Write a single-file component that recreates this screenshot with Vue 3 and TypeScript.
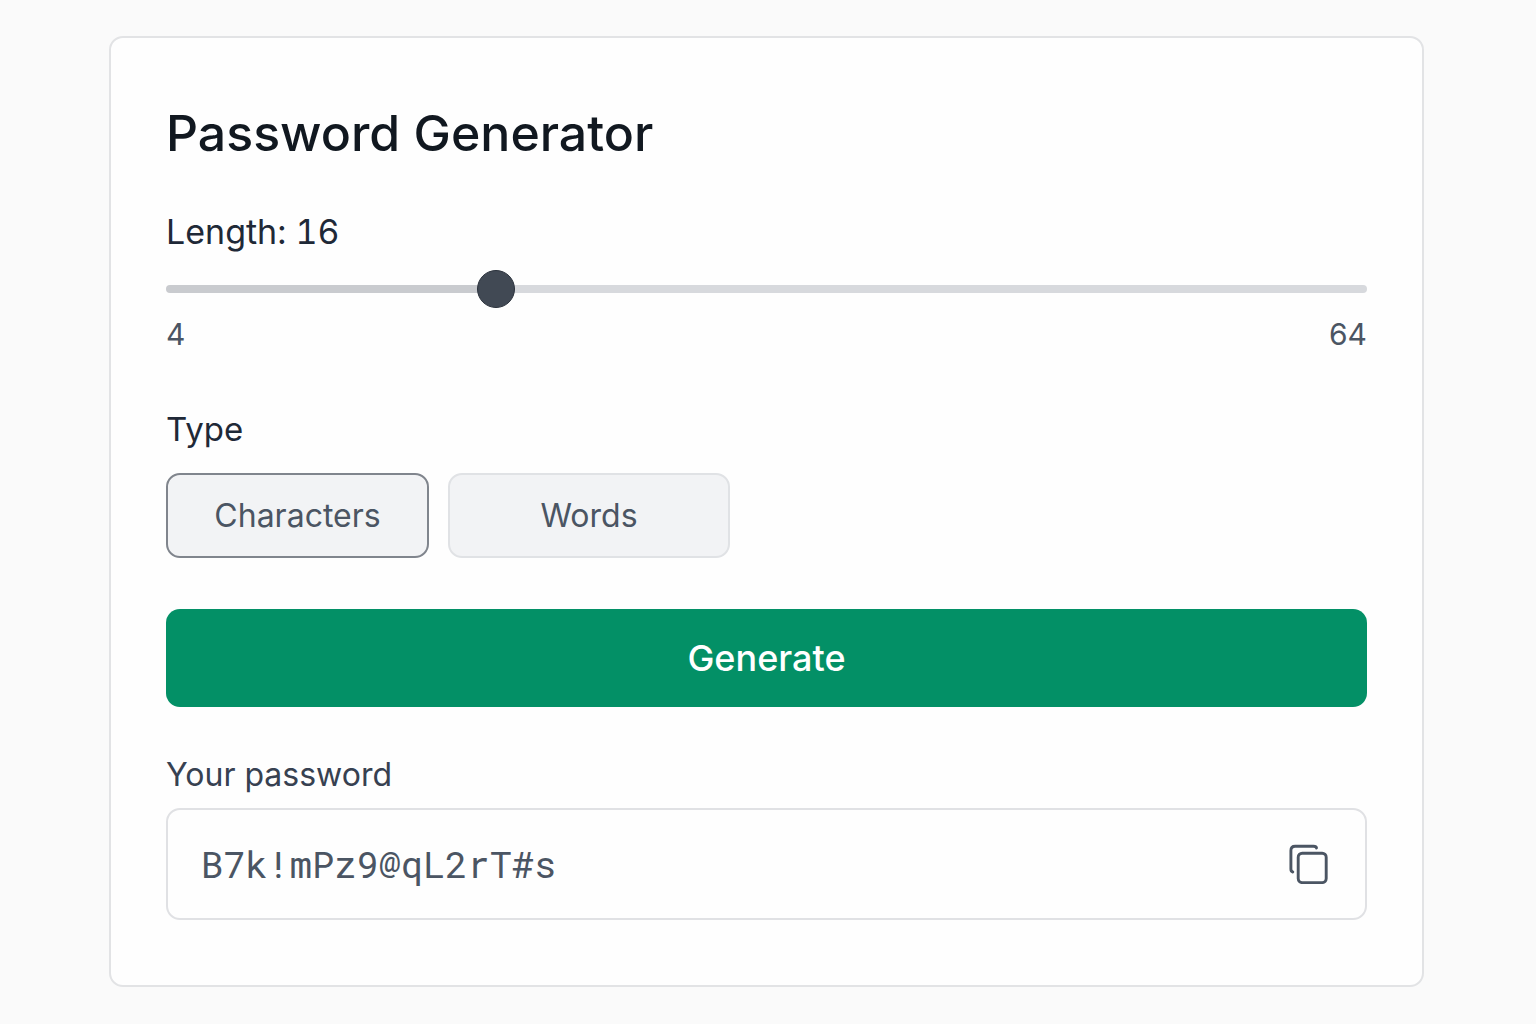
<script setup lang="ts">
import { computed, ref } from 'vue'

type PasswordType = 'characters' | 'words'

const min = 4
const max = 64
const length = ref(16)
const selected = ref<PasswordType>('characters')
const password = ref('B7k!mPz9@qL2rT#s')

// The track uses an eased scale so short lengths get finer control.
const steps = 1000
const exponent = 1.22
const position = computed({
  get: () => Math.round(Math.pow((length.value - min) / (max - min), 1 / exponent) * steps),
  set: (p: number) => {
    length.value = Math.round(min + Math.pow(p / steps, exponent) * (max - min))
  },
})
const fill = computed(() => `${position.value / 10}%`)

const wordList = ['maple', 'river', 'stone', 'cloud', 'ember', 'field', 'lunar', 'tiger']

function generate(): void {
  const pool =
    selected.value === 'characters'
      ? [...'ABCDEFGHJKLMNPQRSTUVWXYZabcdefghijkmnopqrstuvwxyz23456789!@#$%']
      : wordList
  const values = crypto.getRandomValues(new Uint32Array(length.value))
  const picks = Array.from(values, (v) => pool[v % pool.length])
  password.value =
    selected.value === 'characters' ? picks.join('') : picks.join('-').slice(0, length.value)
}

function copy(): void {
  void navigator.clipboard?.writeText(password.value)
}
</script>

<template>
  <main class="page">
    <section class="card">
      <h1>Password Generator</h1>
      <label class="label" for="length">Length: {{ length }}</label>
      <input
        id="length"
        v-model.number="position"
        class="slider"
        type="range"
        min="0"
        :max="steps"
        :aria-valuetext="String(length)"
        :style="{ '--fill': fill }"
      />
      <div class="bounds"><span>{{ min }}</span><span>{{ max }}</span></div>

      <div id="type-label" class="label type-label">Type</div>
      <div class="types" role="group" aria-labelledby="type-label">
        <button
          type="button"
          class="type characters"
          :class="{ active: selected === 'characters' }"
          :aria-pressed="selected === 'characters'"
          @click="selected = 'characters'"
        >Characters</button>
        <button
          type="button"
          class="type words"
          :class="{ active: selected === 'words' }"
          :aria-pressed="selected === 'words'"
          @click="selected = 'words'"
        >Words</button>
      </div>

      <button type="button" class="generate" @click="generate">Generate</button>

      <label class="result-label" for="password">Your password</label>
      <div class="result">
        <input id="password" class="password" type="text" readonly :value="password" />
        <button type="button" class="copy" aria-label="Copy password" @click="copy">
          <svg viewBox="0 0 40 40" fill="none" stroke="currentColor" stroke-width="2.9" stroke-linecap="round" stroke-linejoin="round">
            <rect x="9.200" y="9.200" width="28" height="29.400" rx="4" />
            <path d="M3.800 28 Q1.900 27.500 1.900 25 V6.500 Q1.900 2.200 6.200 2.200 H24.500 Q27.300 2.200 27.500 4" />
          </svg>
        </button>
      </div>
    </section>
  </main>
</template>

<style>
body {
  background: #fafafa;
}
</style>

<style scoped>
.page {
  box-sizing: border-box;
  padding: 36px 112px 37px 109px;
  font-family: Inter, 'Liberation Sans', sans-serif;
  color: #1f2937;
}
.page * {
  box-sizing: border-box;
}
.card {
  display: flex;
  flex-direction: column;
  padding: 65px 55px 65px;
  background: #fefefe;
  border: 2px solid #e2e3e5;
  border-radius: 14px;
}
h1 {
  margin: 0;
  font-size: 50px;
  line-height: 60px;
  font-weight: 550;
  color: #111820;
}
.label,
.result-label {
  line-height: 44px;
}
.label {
  margin-top: 47px;
  font-size: 34px;
  font-variant-numeric: tabular-nums;
}
.slider {
  appearance: none;
  width: 100%;
  height: 38px;
  margin: 16px 0 0;
  background: none;
  cursor: pointer;
}
.slider::-webkit-slider-runnable-track {
  height: 8px;
  border-radius: 4px;
  background: linear-gradient(#c9cbcf, #c9cbcf) left / var(--fill) 100% no-repeat, #d7d9dd;
}
.slider::-webkit-slider-thumb {
  appearance: none;
  width: 38px;
  height: 38px;
  margin-top: -15px;
  border: 1px solid #2b323c;
  border-radius: 50%;
  background: #414954;
}
.bounds {
  display: flex;
  justify-content: space-between;
  margin-top: 6px;
  font-size: 30px;
  line-height: 40px;
  color: #4b5563;
}
.type-label {
  margin-top: 53px;
  font-size: 33px;
}
.types {
  display: flex;
  gap: 19px;
  margin-top: 22px;
}
button {
  font-family: inherit;
  cursor: pointer;
}
.type {
  height: 85px;
  padding: 0;
  font-size: 32px;
  color: #4b5563;
  background: #f2f3f5;
  border: 2px solid #e0e2e5;
  border-radius: 14px;
}
.type.active {
  border-color: #80858d;
}
.characters {
  width: 263px;
}
.words {
  width: 282px;
}
.generate {
  height: 98px;
  margin-top: 51px;
  border: 0;
  border-radius: 14px;
  background: #039066;
  color: #fff;
  font-size: 36px;
  font-weight: 550;
}
.result-label {
  margin-top: 46px;
  font-size: 32px;
  color: #374151;
}
.result {
  display: flex;
  align-items: center;
  height: 112px;
  margin-top: 11px;
  padding: 0 36px 0 33px;
  border: 2px solid #e0e1e4;
  border-radius: 14px;
}
.password {
  flex: 1;
  min-width: 0;
  padding: 0 0 2px;
  border: 0;
  outline: 0;
  background: transparent;
  color: #4b5563;
  font-family: 'Roboto Mono', 'DejaVu Sans Mono', monospace;
  font-size: 37px;
}
.copy {
  width: 40px;
  height: 40px;
  padding: 0;
  border: 0;
  background: none;
  color: #4b5563;
}
.copy svg {
  display: block;
  width: 40px;
  height: 40px;
}
</style>
